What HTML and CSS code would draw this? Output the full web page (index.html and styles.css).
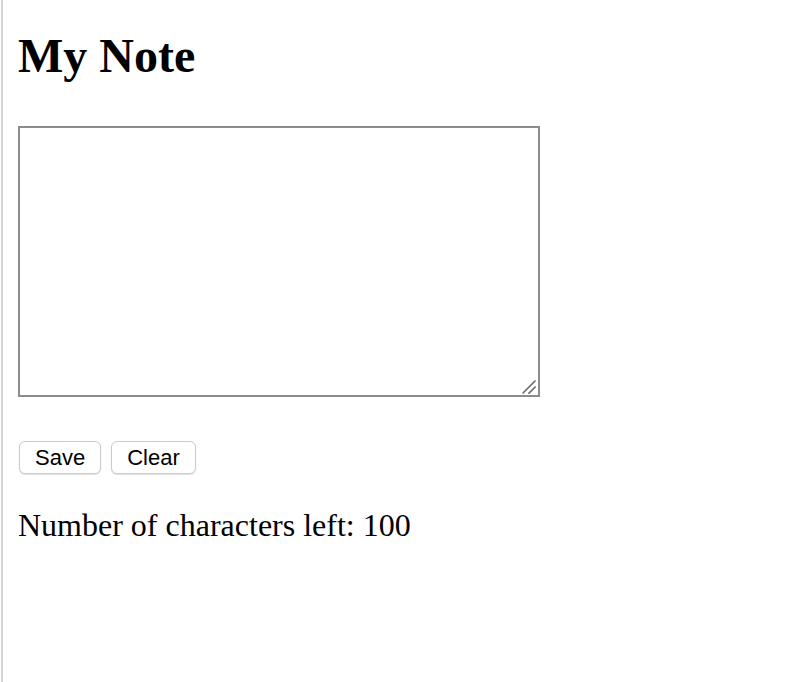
FILE: index.html
```html
<!DOCTYPE html>
<html>
<head>
<meta charset="utf-8">
<title>My Note</title>
<link rel="stylesheet" href="styles.css">
</head>
<body>
<div class="page">
  <h1 class="title">My Note</h1>
  <div class="note-wrap">
    <textarea class="note" maxlength="100"></textarea>
    <svg class="grip" width="14" height="14" viewBox="0 0 14 14" aria-hidden="true">
      <path d="M1 13 L13 1" stroke="#6e6e6e" stroke-width="1.7" stroke-linecap="round"/>
      <path d="M7 13.2 L13.2 7" stroke="#6e6e6e" stroke-width="1.7" stroke-linecap="round"/>
    </svg>
  </div>
  <div class="actions">
    <button class="btn" type="button">Save</button>
    <button class="btn" type="button">Clear</button>
  </div>
  <p class="counter">Number of characters left: 100</p>
</div>
</body>
</html>
```

FILE: styles.css
```css
html, body {
  margin: 0;
  padding: 0;
  background: #fff;
}
body {
  font-family: "Liberation Serif", "Times New Roman", serif;
  color: #000;
}
.page {
  box-sizing: border-box;
  min-height: 682px;
  margin-left: 1px;
  border-left: 2px solid #d4d4d4;
  padding: 29px 16px 0 15px;
}
.title {
  margin: 0;
  font-size: 48px;
  font-weight: bold;
  line-height: 53px;
}
.note-wrap {
  position: relative;
  width: 522px;
  height: 271px;
  margin-top: 44px;
}
.note {
  display: block;
  box-sizing: border-box;
  width: 100%;
  height: 100%;
  margin: 0;
  border: 2px solid #8c8c8c;
  background: #fff;
  padding: 4px;
  font-size: 26px;
  resize: none;
}
.grip {
  position: absolute;
  right: 4px;
  bottom: 3px;
  pointer-events: none;
}
.actions {
  display: flex;
  gap: 10px;
  margin-top: 44px;
  padding-left: 1px;
}
.btn {
  box-sizing: border-box;
  height: 33px;
  padding: 0 15px;
  border: 1px solid #cbcbcb;
  border-radius: 6px;
  background: #fff;
  box-shadow: 0 1px 1px rgba(0, 0, 0, 0.12);
  font-family: "Liberation Sans", Arial, sans-serif;
  font-size: 22px;
  color: #000;
  line-height: 31px;
}
.counter {
  margin: 34px 0 0 0;
  font-size: 32px;
  line-height: 35px;
}
```
